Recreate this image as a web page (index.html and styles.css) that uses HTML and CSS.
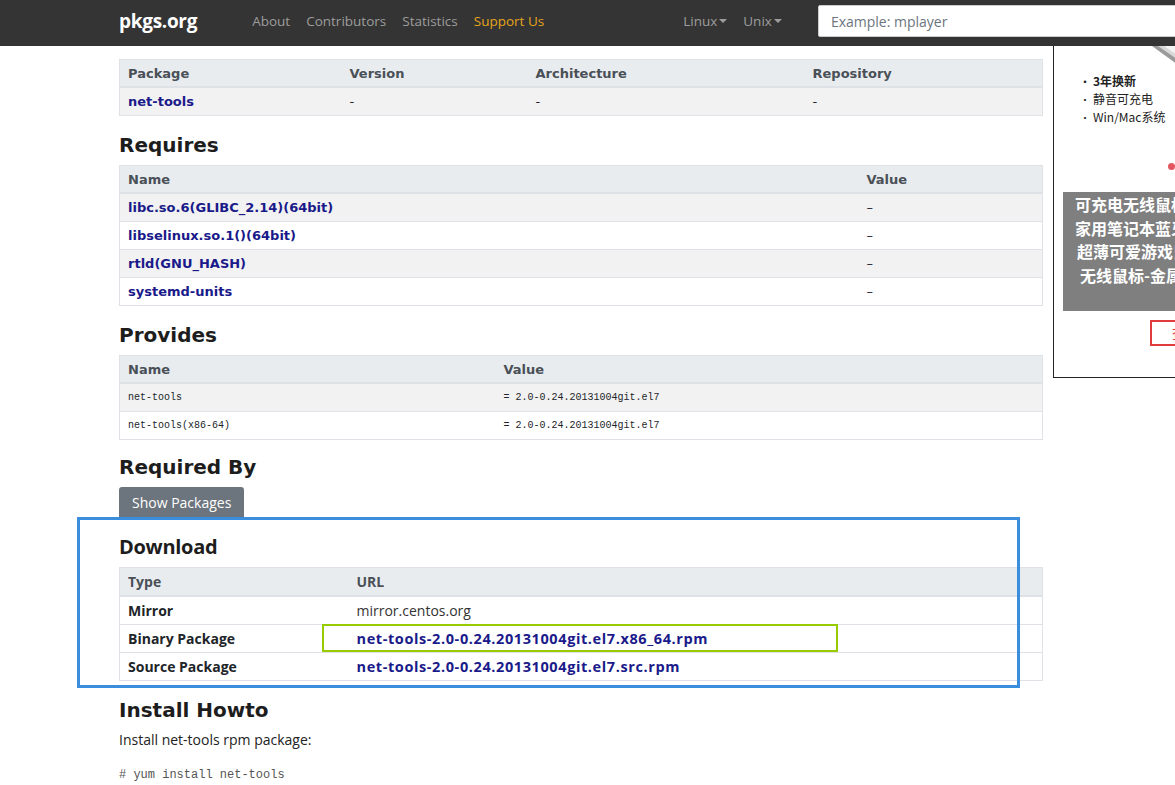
FILE: index.html
```html
<!DOCTYPE html>
<html lang="en">
<head>
<meta charset="utf-8">
<title>net-tools - pkgs.org</title>
<link rel="stylesheet" href="styles.css">
</head>
<body>
<nav class="navbar">
  <a class="brand" href="#">pkgs.org</a>
  <ul class="nav-links">
    <li><a href="#">About</a></li>
    <li><a href="#">Contributors</a></li>
    <li><a href="#">Statistics</a></li>
    <li><a href="#" class="support">Support Us</a></li>
  </ul>
  <ul class="nav-drops">
    <li><a href="#">Linux<span class="caret"></span></a></li>
    <li><a href="#">Unix<span class="caret"></span></a></li>
  </ul>
  <input class="search" type="text" placeholder="Example: mplayer">
</nav>

<div class="page">
  <main class="main">
    <table class="tbl t-pkg">
      <thead><tr><th>Package</th><th>Version</th><th>Architecture</th><th>Repository</th></tr></thead>
      <tbody><tr class="odd"><td><a href="#">net-tools</a></td><td>-</td><td>-</td><td>-</td></tr></tbody>
    </table>

    <h2>Requires</h2>
    <table class="tbl t-req">
      <thead><tr><th>Name</th><th>Value</th></tr></thead>
      <tbody>
        <tr class="odd"><td><a href="#">libc.so.6(GLIBC_2.14)(64bit)</a></td><td>–</td></tr>
        <tr><td><a href="#">libselinux.so.1()(64bit)</a></td><td>–</td></tr>
        <tr class="odd"><td><a href="#">rtld(GNU_HASH)</a></td><td>–</td></tr>
        <tr><td><a href="#">systemd-units</a></td><td>–</td></tr>
      </tbody>
    </table>

    <h2>Provides</h2>
    <table class="tbl t-prov">
      <thead><tr><th>Name</th><th>Value</th></tr></thead>
      <tbody>
        <tr class="odd"><td class="mono">net-tools</td><td class="mono">= 2.0-0.24.20131004git.el7</td></tr>
        <tr><td class="mono">net-tools(x86-64)</td><td class="mono">= 2.0-0.24.20131004git.el7</td></tr>
      </tbody>
    </table>

    <h2 class="h-rb">Required By</h2>
    <button class="btn">Show Packages</button>

    <section class="download">
      <h2 class="h-dl">Download</h2>
      <table class="tbl t-dl">
        <thead><tr><th>Type</th><th>URL</th></tr></thead>
        <tbody>
          <tr><th>Mirror</th><td>mirror.centos.org</td></tr>
          <tr><th>Binary Package</th><td><a href="#">net-tools-2.0-0.24.20131004git.el7.x86_64.rpm</a></td></tr>
          <tr><th>Source Package</th><td><a href="#">net-tools-2.0-0.24.20131004git.el7.src.rpm</a></td></tr>
        </tbody>
      </table>
      <div class="mark-blue"></div>
      <div class="mark-green"></div>
    </section>

    <h2>Install Howto</h2>
    <p class="howto">Install net-tools rpm package:</p>
    <pre class="cmd"># yum install net-tools</pre>
  </main>

  <aside class="ad">
    <svg class="ad-stripe" width="60" height="40" viewBox="0 0 60 40">
      <path d="M18 0 L60 0 L60 30 Z" fill="#f4f4f4"/>
      <path d="M16 0 L26 0 L60 24 L60 32 Z" fill="#9a9a9a"/>
      <path d="M22 0 L28 0 L60 22 L60 26 Z" fill="#d8d8d8"/>
    </svg>
    <ul class="ad-list">
      <li class="b">3年换新</li>
      <li>静音可充电</li>
      <li>Win/Mac系统</li>
    </ul>
    <span class="ad-dot"></span>
    <div class="ad-box">
      <p>可充电无线鼠标</p>
      <p>家用笔记本蓝牙</p>
      <p class="l3">超薄可爱游戏鼠</p>
      <p class="l4">无线鼠标-金属</p>
    </div>
    <div class="ad-btn">查看</div>
  </aside>
</div>
</body>
</html>
```

FILE: styles.css
```css
* { box-sizing: border-box; }
html, body { margin: 0; padding: 0; }
body {
  background: #fff;
  color: #212529;
  font-family: "DejaVu Sans", Verdana, sans-serif;
  overflow: hidden;
  width: 1175px;
}
a { text-decoration: none; }

.navbar {
  height: 46px;
  background: #343434;
  display: flex;
  align-items: center;
  padding: 0 0 5px 119px;
  font-family: "Open Sans", "Noto Sans", sans-serif;
  font-size: 13.5px;
  white-space: nowrap;
  overflow: hidden;
}
.brand {
  color: #fff;
  font-weight: 700;
  font-size: 19px;
  letter-spacing: -0.3px;
  margin-right: 55px;
  flex-shrink: 0;
}
.nav-links, .nav-drops {
  list-style: none;
  margin: 0;
  padding: 0;
  display: flex;
  flex-shrink: 0;
}
.nav-links li a, .nav-drops li a {
  color: #9d9d9d;
  padding: 0 8px;
  display: block;
}
.nav-links li:first-child a { padding-left: 0; }
.nav-links .support { color: #e6a41c; }
.nav-drops { margin-left: 123px; }
.caret {
  display: inline-block;
  width: 0; height: 0;
  border-left: 4px solid transparent;
  border-right: 4px solid transparent;
  border-top: 4px solid #9d9d9d;
  margin-left: 2px;
  vertical-align: 3px;
}
.search {
  align-self: flex-start;
  margin-left: 28px;
  margin-top: 5px;
  height: 32px;
  width: 380px;
  border: 1px solid #ccc;
  border-radius: 2px;
  padding: 0 12px;
  font-family: "Open Sans", "Noto Sans", sans-serif;
  font-size: 14px;
  background: #fff;
  flex-shrink: 0;
}
.search::placeholder { color: #6c757d; }

.page {
  display: flex;
  align-items: flex-start;
  padding-left: 119px;
  gap: 10px;
}
.main {
  width: 924px;
  flex-shrink: 0;
  padding-top: 13px;
}

.tbl {
  width: 100%;
  border-collapse: collapse;
  border: 1px solid #dee2e6;
  font-size: 13px;
}
.tbl th, .tbl td {
  text-align: left;
  padding: 5px 8px;
  line-height: 17px;
  border-top: 1px solid #dee2e6;
  vertical-align: middle;
}
.tbl thead th {
  background: #e9ecef;
  color: #495057;
  font-weight: 700;
  border-bottom: 2px solid #dee2e6;
  padding-top: 5px;
  padding-bottom: 4px;
}
.tbl tbody tr.odd { background: #f2f2f2; }
.tbl a { color: #1a1a8a; font-weight: 700; }
.tbl td { color: #212529; }

.t-pkg th:nth-child(1) { width: 222px; }
.t-pkg th:nth-child(2) { width: 186px; }
.t-pkg th:nth-child(3) { width: 277px; }
.t-req th:nth-child(1) { width: 739px; }
.t-prov th:nth-child(1) { width: 376px; }
.t-dl th:first-child { width: 229px; }

.mono {
  font-family: "Liberation Mono", "DejaVu Sans Mono", monospace;
  font-size: 10px;
  color: #222;
}

h2 {
  font-size: 20px;
  font-weight: 700;
  line-height: 24px;
  margin: 17px 0 8px;
  color: #1d1d1d;
}
h2.h-rb { margin-top: 15px; }

.btn {
  display: block;
  height: 30px;
  padding: 0 13px;
  background: #6c757d;
  color: #fff;
  border: none;
  border-radius: 3px 3px 0 0;
  font-family: "Open Sans", "Noto Sans", sans-serif;
  font-size: 14px;
}

.download {
  position: relative;
  padding-top: 18px;
}
.download .h-dl {
  margin-top: 0;
  margin-bottom: 8px;
  font-family: "Open Sans", "Noto Sans", sans-serif;
  letter-spacing: -0.3px;
}
.t-dl { font-family: "Open Sans", "Noto Sans", sans-serif; font-size: 14px; }
.t-dl th, .t-dl td { padding-top: 5px; padding-bottom: 5px; line-height: 17px; }
.t-dl thead th { padding-top: 5px; padding-bottom: 5px; }
.t-dl tbody th { font-weight: 700; color: #212529; }
.t-dl td { color: #333; }
.t-dl a { font-size: 14.5px; letter-spacing: 0.6px; }

.mark-blue {
  position: absolute;
  left: -42px;
  top: 0;
  width: 943px;
  height: 171px;
  border: 3px solid #3b8ede;
  pointer-events: none;
}
.mark-green {
  position: absolute;
  left: 203px;
  top: 107px;
  width: 516px;
  height: 28px;
  border: 2.5px solid #99cc00;
  pointer-events: none;
}

.howto {
  margin: 7px 0 0;
  font-family: "Open Sans", "Noto Sans", sans-serif;
  font-size: 14px;
  line-height: 20px;
  color: #222;
}
.cmd {
  margin: 15px 0 0;
  font-family: "Liberation Mono", "DejaVu Sans Mono", monospace;
  font-size: 12px;
  line-height: 20px;
  color: #555;
}

.ad {
  position: relative;
  width: 200px;
  height: 332px;
  flex-shrink: 0;
  border-left: 1px solid #222;
  border-bottom: 1px solid #222;
  background: #fff;
  overflow: hidden;
  font-family: "Noto Sans CJK SC", "Noto Sans", sans-serif;
}
.ad-stripe { position: absolute; left: 82px; top: 0; }
.ad-list {
  list-style: none;
  margin: 0;
  padding: 26px 0 0 26px;
  font-size: 12px;
  line-height: 17px;
  color: #222;
}
.ad-list li::before { content: "•"; font-size: 10px; margin-right: 3px; }
.ad-list li.b { font-weight: 700; }
.ad-dot {
  position: absolute;
  left: 114px;
  top: 117px;
  width: 7px;
  height: 7px;
  border-radius: 50%;
  background: #e35560;
}
.ad-box {
  position: absolute;
  left: 9px;
  top: 146px;
  width: 200px;
  height: 119px;
  background: #7f7f7f;
  padding: 1px 0 0 12px;
  white-space: nowrap;
}
.ad-box p {
  margin: 0;
  color: #fff;
  font-weight: 700;
  font-size: 16px;
  line-height: 23.5px;
}
.ad-box p.l3 { padding-left: 2px; }
.ad-box p.l4 { padding-left: 5px; }
.ad-btn {
  position: absolute;
  left: 96px;
  top: 274px;
  width: 80px;
  height: 26px;
  border: 2px solid #e23b3b;
  color: #e23b3b;
  font-size: 14px;
  line-height: 22px;
  padding-left: 20px;
}
```
